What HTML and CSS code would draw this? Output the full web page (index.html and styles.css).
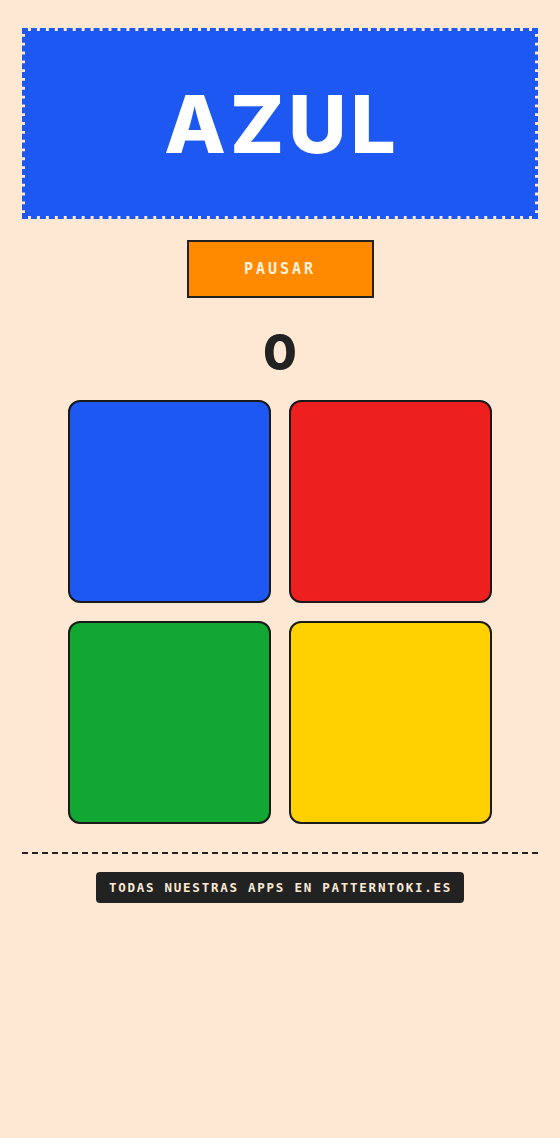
FILE: index.html
```html
<!DOCTYPE html>
<html lang="es">
<head>
  <meta charset="UTF-8">
  <title>Colores</title>
  <meta name="viewport" content="width=device-width, initial-scale=1.0">
  <link rel="stylesheet" href="styles.css">
</head>
<body>
  <main class="app">
    <div class="banner">
      <span class="banner-word">AZUL</span>
    </div>

    <button class="btn-pause">PAUSAR</button>

    <div class="score">0</div>

    <div class="board">
      <div class="tile tile-blue"></div>
      <div class="tile tile-red"></div>
      <div class="tile tile-green"></div>
      <div class="tile tile-yellow"></div>
    </div>

    <hr class="divider">

    <a class="footer-link" href="#">TODAS NUESTRAS APPS EN PATTERNTOKI.ES</a>
  </main>
</body>
</html>
```

FILE: styles.css
```css
body {
  margin: 0;
  padding: 0;
  background: #fee8d4;
  font-family: "DejaVu Sans Mono", monospace;
  min-height: 100vh;
}

.app {
  display: flex;
  flex-direction: column;
  align-items: center;
  padding: 28px 22px 0;
}

.banner {
  box-sizing: border-box;
  width: 100%;
  height: 191px;
  background: #1c58f1;
  background-clip: padding-box;
  border: 3px dashed #1c58f1;
  display: flex;
  align-items: center;
  justify-content: center;
}

.banner-word {
  font-family: Inter, "Noto Sans", sans-serif;
  font-weight: 800;
  font-size: 80px;
  letter-spacing: 4px;
  padding-left: 4px;
  color: #fff;
  line-height: 1;
}

.btn-pause {
  margin-top: 21px;
  width: 187px;
  height: 58px;
  background: #ff8a00;
  border: 2px solid #222;
  color: #fff3e0;
  font-family: "DejaVu Sans Mono", monospace;
  font-weight: bold;
  font-size: 15px;
  letter-spacing: 3px;
  cursor: pointer;
}

.score {
  margin-top: 8px;
  font-family: Inter, "Noto Sans", sans-serif;
  font-weight: 800;
  font-size: 49px;
  line-height: 94px;
  color: #222;
}

.board {
  display: grid;
  grid-template-columns: 203px 203px;
  gap: 18px;
}

.tile {
  box-sizing: border-box;
  height: 203px;
  border: 2px solid #1a1a1a;
  border-radius: 12px;
  cursor: pointer;
}

.tile-blue { background: #1c58f1; }
.tile-red { background: #ed1f1f; }
.tile-green { background: #12a632; }
.tile-yellow { background: #ffd101; }

.divider {
  align-self: stretch;
  margin: 28px 0 0;
  border: none;
  border-top: 2px dashed #222;
}

.footer-link {
  margin-top: 18px;
  padding: 8px 12px 8px 13px;
  background: #222;
  color: #fbe9d6;
  border-radius: 4px;
  font-weight: bold;
  font-size: 12.5px;
  letter-spacing: 1.75px;
  text-decoration: none;
}
```
